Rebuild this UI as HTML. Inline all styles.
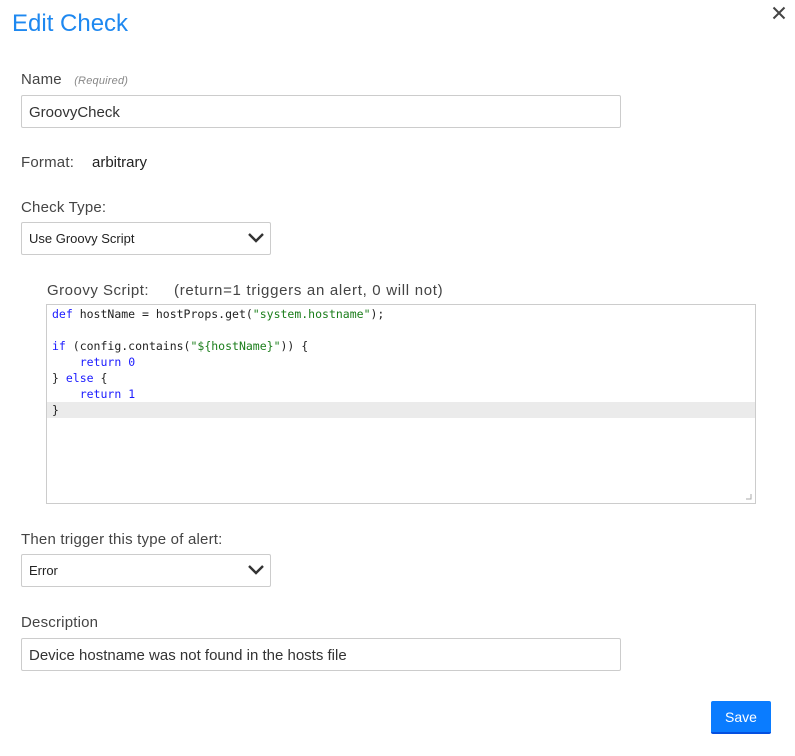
<!DOCTYPE html>
<html><head><style>
body{margin:0;width:795px;height:756px;background:#fff;font-family:"Liberation Sans",sans-serif;color:#333;position:relative;overflow:hidden}
.a{position:absolute}
.lbl{font-size:15px;color:#444;letter-spacing:0.2px}
.inp{border:1px solid #ccc;border-radius:2px;box-sizing:border-box;font-size:15px;color:#333;padding-left:7px;display:flex;align-items:center;padding-top:2px}
.sel{border:1px solid #ccc;border-radius:2px;box-sizing:border-box;font-size:13px;color:#222;padding-left:7px;display:flex;align-items:center}
pre{margin:0;font-family:"DejaVu Sans Mono","Liberation Mono",monospace;font-size:11.5px;line-height:16px;color:#222}
.k{color:#1a1aff}.s{color:#1a7d1a}
</style></head><body>
<div class="a" style="left:12px;top:10px;font-size:24px;color:#1e88f0">Edit Check</div>
<svg class="a" style="left:772px;top:6px" width="14" height="14"><path d="M1.5 1.5L12.5 12.5M12.5 1.5L1.5 12.5" stroke="#444" stroke-width="2"/></svg>
<div class="a lbl" style="left:21px;top:71px">Name <i style="font-size:11px;color:#888;margin-left:8px">(Required)</i></div>
<div class="a inp" style="left:21px;top:95px;width:600px;height:33px">GroovyCheck</div>
<div class="a lbl" style="left:21px;top:154px">Format:</div>
<div class="a" style="left:92px;top:154px;font-size:15px;color:#222">arbitrary</div>
<div class="a lbl" style="left:21px;top:199px">Check Type:</div>
<div class="a sel" style="left:21px;top:222px;width:250px;height:33px">Use Groovy Script</div>
<svg class="a" style="left:247px;top:232px" width="18" height="12"><path d="M2 2L9 9L16 2" stroke="#333" stroke-width="2.4" fill="none"/></svg>
<div class="a lbl" style="left:47px;top:282px;letter-spacing:0.5px">Groovy Script:</div>
<div class="a lbl" style="left:174px;top:282px;letter-spacing:0.7px">(return=1 triggers an alert, 0 will not)</div>
<div class="a" style="left:46px;top:304px;width:710px;height:200px;border:1px solid #ccc;box-sizing:border-box">
<div class="a" style="left:0;top:97px;width:708px;height:16px;background:#ebebeb"></div>
<pre class="a" style="left:5px;top:1px"><span class="k">def</span> hostName = hostProps.get(<span class="s">"system.hostname"</span>);

<span class="k">if</span> (config.contains(<span class="s">"${hostName}"</span>)) {
    <span class="k">return</span> <span class="k">0</span>
} <span class="k">else</span> {
    <span class="k">return</span> <span class="k">1</span>
}</pre>
<svg class="a" style="right:3px;bottom:3px" width="6" height="6"><path d="M5 0V5H0" stroke="#aaa" fill="none"/></svg>
</div>
<div class="a lbl" style="left:21px;top:531px">Then trigger this type of alert:</div>
<div class="a sel" style="left:21px;top:554px;width:250px;height:33px">Error</div>
<svg class="a" style="left:247px;top:564px" width="18" height="12"><path d="M2 2L9 9L16 2" stroke="#333" stroke-width="2.4" fill="none"/></svg>
<div class="a lbl" style="left:21px;top:614px">Description</div>
<div class="a inp" style="left:21px;top:638px;width:600px;height:33px">Device hostname was not found in the hosts file</div>
<div class="a" style="left:711px;top:701px;width:60px;height:33px;background:#0a7cff;border-bottom:2px solid #0550e0;box-sizing:border-box;border-radius:2px;color:#fff;font-size:14px;display:flex;align-items:center;justify-content:center">Save</div>
</body></html>
